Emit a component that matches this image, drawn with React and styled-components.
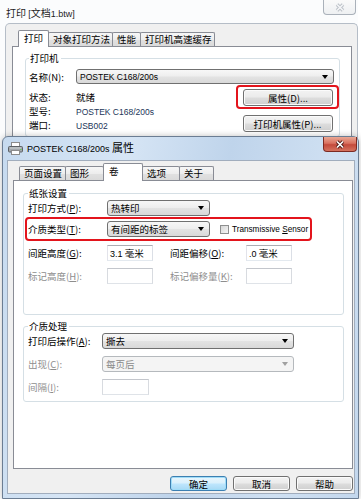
import React from 'react';
import styled, { createGlobalStyle } from 'styled-components';

const GlobalStyle = createGlobalStyle`
  html, body { margin: 0; padding: 0; background: #fff; }
  body {
    font-family: "Noto Sans CJK SC", "Noto Sans", sans-serif;
    font-size: 9.5px;
    line-height: 12px;
    color: #000;
  }
  * { box-sizing: border-box; }
`;

const Desktop = styled.div`
  position: relative;
  width: 361px;
  height: 499px;
  overflow: hidden;
  background: #fff;
`;

/* ---------- window chrome ---------- */

const BackWindow = styled.div`
  position: absolute;
  left: 0;
  top: 0;
  width: 358px;
  height: 150px;
  display: flex;
  flex-direction: column;
  background: #fbfcfd;
`;

const BackTitleBar = styled.div`
  height: 23px;
  display: flex;
  align-items: flex-start;
  padding-left: 6px;
`;

const BackTitle = styled.span`
  margin-top: 7px;
  font-size: 10px;
  color: #1e1e1e;
`;

const InactiveClose = styled.div`
  margin-left: auto;
  margin-right: 2px;
  width: 33px;
  height: 15px;
  display: flex;
  align-items: center;
  justify-content: center;
  border: 1px solid #aab1ba;
  border-top: none;
  border-radius: 0 0 4px 4px;
  background: linear-gradient(#fafafa, #eef0f2);
`;

const BackBody = styled.div`
  flex: 1;
  display: flex;
  flex-direction: column;
  margin-left: 5px;
  padding: 6px 5px 0 6px;
  border: 1px solid #b5bdc7;
  border-bottom: none;
  border-radius: 5px 5px 0 0;
  background: #f0f0f0;
`;

const Dialog = styled.div`
  position: absolute;
  left: 2px;
  top: 136px;
  width: 357px;
  height: 363px;
  display: flex;
  flex-direction: column;
  padding: 0 3px 4px 4px;
  border: 1px solid #6b7d93;
  border-radius: 6px 6px 0 0;
  background: linear-gradient(100deg, #c6daef 0%, #d6e5f5 30%, #bfd4eb 55%, #cfe0f2 80%, #c3d7ed 100%);
  box-shadow: 0 0 6px rgba(0, 0, 0, 0.25);
`;

const TitleBar = styled.div`
  height: 23px;
  margin: 0 -3px 0 -4px;
  padding-left: 5px;
  display: flex;
  align-items: flex-start;
`;

const TitleIcon = styled.svg`
  margin-top: 5px;
  flex: none;
`;

const TitleText = styled.span`
  margin: 4px 0 0 4px;
  font-size: 11px;
  line-height: 13px;
  color: #000;
`;

const CloseButton = styled.div`
  margin-left: auto;
  margin-right: 1px;
  width: 34px;
  height: 15px;
  display: flex;
  align-items: center;
  justify-content: center;
  border: 1px solid #7c2a22;
  border-top: none;
  border-radius: 0 0 4px 4px;
  background: linear-gradient(#eaa894 0%, #d9705f 45%, #c44a3b 55%, #d5735f 100%);
`;

const DialogBody = styled.div`
  flex: 1;
  display: flex;
  flex-direction: column;
  padding: 2px 1px 2px 5px;
  border: 1px solid #a1adbd;
  background: #f0f0f0;
`;

/* ---------- tabs ---------- */

const TabRow = styled.div`
  display: flex;
  align-items: flex-end;
  height: ${p => p.$h}px;
  padding-left: ${p => p.$indent}px;
  position: relative;
  z-index: 1;
`;

const Tab = styled.div`
  width: ${p => p.$w}px;
  height: ${p => (p.$active ? 'auto' : '14px')};
  align-self: ${p => (p.$active ? 'stretch' : 'flex-end')};
  margin-bottom: ${p => (p.$active ? -1 : 0)}px;
  margin-left: ${p => (p.$first ? 0 : -1)}px;
  padding: ${p => (p.$active ? '1px 0 0 5px' : '0 0 0 4px')};
  border: 1px solid #898c95;
  border-bottom: none;
  border-radius: 2px 2px 0 0;
  white-space: nowrap;
  background: ${p =>
    p.$active ? '#fff' : 'linear-gradient(#f7f7f7 0%, #ededed 50%, #e1e1e1 51%, #dadada 100%)'};
  position: relative;
  z-index: ${p => (p.$active ? 2 : 1)};
`;

const Panel = styled.div`
  flex: 1;
  display: flex;
  flex-direction: column;
  padding: ${p => p.$pad};
  border: 1px solid #898c95;
  background: #fff;
`;

/* ---------- groups and rows ---------- */

const Group = styled.fieldset`
  margin: ${p => p.$mt || 0}px 0 0 0;
  min-width: 0;
  padding: 0 ${p => p.$pr || 0}px ${p => p.$pb || 0}px ${p => p.$pl || 4}px;
  border: 1px solid #d5dfe5;
  border-radius: 3px;
`;

const Legend = styled.legend`
  padding: 0 2px 0 1px;
  font-size: 9.5px;
  line-height: 12px;
  color: #000;
`;

const Row = styled.div`
  display: flex;
  align-items: center;
  height: ${p => p.$h || 16}px;
  margin-top: ${p => p.$mt || 0}px;
`;

const Highlight = styled.div`
  display: flex;
  flex-direction: ${p => p.$dir || 'row'};
  align-items: center;
  width: ${p => p.$w}px;
  height: ${p => p.$h}px;
  margin: ${p => p.$m};
  padding: ${p => p.$pad};
  border: 2px solid #e3141c;
  border-radius: 4px;
`;

const Label = styled.span`
  flex: none;
  width: ${p => p.$w}px;
  margin-left: ${p => p.$ml || 0}px;
  white-space: nowrap;
  color: ${p => (p.$disabled ? '#8e8e8e' : '#000')};
`;

const Key = styled.span`
  text-decoration: underline;
`;

const Latin = styled.span`
  font-family: "Liberation Sans", Arial, sans-serif;
  font-size: ${p => p.$size || 8.5}px;
`;

const Value = styled.span`
  white-space: nowrap;
  color: ${p => p.$tone || '#000'};
`;

const Combo = styled.div`
  flex: none;
  width: ${p => p.$w}px;
  height: ${p => p.$h || 16}px;
  display: flex;
  align-items: center;
  justify-content: space-between;
  padding: 0 5px 0 3px;
  border: 1px solid ${p => (p.$disabled ? '#b5b9bd' : '#707070')};
  border-radius: 3px;
  white-space: nowrap;
  color: ${p => (p.$disabled ? '#8a8a8a' : '#000')};
  background: ${p =>
    p.$disabled
      ? '#f4f4f4'
      : 'linear-gradient(#f7f7f7 0%, #eeeeee 48%, #e3e3e3 52%, #d9d9d9 100%)'};
`;

const Arrow = styled.span`
  width: 0;
  height: 0;
  border-left: 3.5px solid transparent;
  border-right: 3.5px solid transparent;
  border-top: 4px solid ${p => (p.$disabled ? '#a0a0a0' : '#000')};
`;

const Field = styled.div`
  flex: none;
  width: ${p => p.$w || 46}px;
  height: 16px;
  padding-left: 2px;
  border: 1px solid;
  border-color: ${p =>
    p.$disabled ? '#c3c6cc #d8dbe0 #dfe3e8 #d8dbe0' : '#abadb3 #dbdfe6 #e3e9ef #e2e3ea'};
  background: #fff;
  line-height: 14px;
  white-space: nowrap;
`;

const Check = styled.span`
  flex: none;
  width: 9px;
  height: 9px;
  margin: 0 3px 0 10px;
  border: 1px solid #8e8f8f;
  background: linear-gradient(135deg, #d6d6d6, #f6f6f6);
`;

const Split = styled.div`
  display: flex;
  justify-content: space-between;
  margin-top: 1px;
`;

const InfoList = styled.div`
  display: flex;
  flex-direction: column;
  padding-top: 5px;
`;

const InfoRow = styled.div`
  display: flex;
  align-items: center;
  height: 14px;
`;

const ButtonStack = styled.div`
  width: 103px;
  display: flex;
  flex-direction: column;
  align-items: center;
  gap: 6px;
  padding-bottom: 4px;
`;

const Button = styled.button`
  width: ${p => p.$w}px;
  height: ${p => p.$h}px;
  margin: 0;
  padding: 0;
  display: flex;
  align-items: center;
  justify-content: center;
  font: inherit;
  color: #000;
  white-space: nowrap;
  border: 1px solid ${p => (p.$primary ? '#3c7fb1' : '#707070')};
  border-radius: 3px;
  box-shadow: inset 0 0 0 1px ${p => (p.$primary ? '#9fdcf8' : '#fbfbfb')};
  background: ${p =>
    p.$primary
      ? 'linear-gradient(#eaf6fd 0%, #d9f0fc 48%, #bee6fd 52%, #a7d9f5 100%)'
      : 'linear-gradient(#f3f3f3 0%, #ebebeb 48%, #dddddd 52%, #cfcfcf 100%)'};
`;

const ButtonBar = styled.div`
  display: flex;
  justify-content: flex-end;
  gap: 6px;
  margin-top: 7px;
`;

/* ---------- drawings ---------- */

const CloseGlyph = ({ inactive }) => (
  <svg width="12" height="9" viewBox="0 0 12 9">
    <path d="M3 1.5 L9 7.5 M9 1.5 L3 7.5" stroke={inactive ? '#b9bec5' : '#4d1712'} strokeWidth="3.4" />
    <path d="M3 1.5 L9 7.5 M9 1.5 L3 7.5" stroke={inactive ? '#f4f5f7' : '#ffffff'} strokeWidth="1.7" />
  </svg>
);

const PrinterIcon = () => (
  <TitleIcon width="15" height="13" viewBox="0 0 15 13">
    <rect x="3.5" y="0.5" width="8" height="4" fill="#fff" stroke="#8c8c8c" />
    <rect x="0.5" y="4.5" width="14" height="5.5" rx="1" fill="#a3a8ad" stroke="#5d6166" />
    <rect x="2" y="5.5" width="11" height="1" fill="#d0d3d6" />
    <rect x="12" y="7" width="1.5" height="1" fill="#5ec85e" />
    <rect x="3.5" y="8.5" width="8" height="4" fill="#fff" stroke="#8c8c8c" />
  </TitleIcon>
);

const backTabs = [
  { text: '打印', w: 31, active: true },
  { text: '对象打印方法', w: 65 },
  { text: '性能', w: 29 },
  { text: '打印机高速缓存', w: 75 },
];

const frontTabs = [
  { text: '页面设置', w: 47 },
  { text: '图形', w: 39 },
  { text: '卷', w: 40, active: true },
  { text: '选项', w: 38 },
  { text: '关于', w: 35 },
];

const MODEL = 'POSTEK C168/200s';

const App = () => (
  <>
    <GlobalStyle />
    <Desktop>
      <BackWindow>
        <BackTitleBar>
          <BackTitle>
            打印 <Latin $size={9}>[</Latin>文档<Latin $size={9}>1.btw]</Latin>
          </BackTitle>
          <InactiveClose>
            <CloseGlyph inactive />
          </InactiveClose>
        </BackTitleBar>
        <BackBody>
          <TabRow $h={16} $indent={6}>
            {backTabs.map((t, i) => (
              <Tab key={t.text} $w={t.w} $active={t.active} $first={i === 0}>
                {t.text}
              </Tab>
            ))}
          </TabRow>
          <Panel $pad="5px 11px 0 12px">
            <Group $pl={3}>
              <Legend>打印机</Legend>
              <Row $mt={5} $h={15}>
                <Label $w={47}>名称(N):</Label>
                <Combo $w={258} $h={15}>
                  <Latin>{MODEL}</Latin>
                  <Arrow />
                </Combo>
              </Row>
              <Split>
                <InfoList>
                  <InfoRow>
                    <Label $w={47}>状态:</Label>
                    <Value>就绪</Value>
                  </InfoRow>
                  <InfoRow>
                    <Label $w={47}>型号:</Label>
                    <Value $tone="#1b3558">
                      <Latin>{MODEL}</Latin>
                    </Value>
                  </InfoRow>
                  <InfoRow>
                    <Label $w={47}>端口:</Label>
                    <Value $tone="#1b3558">
                      <Latin>USB002</Latin>
                    </Value>
                  </InfoRow>
                </InfoList>
                <ButtonStack>
                  <Highlight $dir="column" $w={103} $h={24} $m="0" $pad="2px 4px 1px 5px">
                    <Button $w={90} $h={17}>属性(D)...</Button>
                  </Highlight>
                  <Button $w={90} $h={17}>打印机属性(P)...</Button>
                </ButtonStack>
              </Split>
            </Group>
          </Panel>
        </BackBody>
      </BackWindow>

      <Dialog>
        <TitleBar>
          <PrinterIcon />
          <TitleText>
            <Latin $size={9}>{MODEL}</Latin> 属性
          </TitleText>
          <CloseButton>
            <CloseGlyph />
          </CloseButton>
        </TitleBar>
        <DialogBody>
          <TabRow $h={17} $indent={6}>
            {frontTabs.map((t, i) => (
              <Tab key={t.text} $w={t.w} $active={t.active} $first={i === 0}>
                {t.text}
              </Tab>
            ))}
          </TabRow>
          <Panel $pad="6px 8px 0 9px">
            <Group $pb={30}>
              <Legend>纸张设置</Legend>
              <Row $mt={1}>
                <Label $w={79}>
                  打印方式(<Key>P</Key>):
                </Label>
                <Combo $w={103}>
                  热转印
                  <Arrow />
                </Combo>
              </Row>
              <Highlight $w={287} $h={24} $m="1px 0 0 -3px" $pad="0 0 0 1px">
                <Label $w={79}>
                  介质类型(<Key>T</Key>):
                </Label>
                <Combo $w={103}>
                  有间距的标签
                  <Arrow />
                </Combo>
                <Check />
                <Value>
                  <Latin $size={8.2}>
                    Transmissive <Key>S</Key>ensor
                  </Latin>
                </Value>
              </Highlight>
              <Row $mt={4}>
                <Label $w={79}>
                  间距高度(<Key>G</Key>):
                </Label>
                <Field>
                  <Latin $size={9}>3.1</Latin> 毫米
                </Field>
                <Label $w={76} $ml={17}>
                  间距偏移(<Key>O</Key>):
                </Label>
                <Field>
                  <Latin $size={9}>.0</Latin> 毫米
                </Field>
              </Row>
              <Row $mt={7}>
                <Label $w={79} $disabled>
                  标记高度(<Key>H</Key>):
                </Label>
                <Field $disabled />
                <Label $w={76} $ml={17} $disabled>
                  标记偏移量(<Key>K</Key>):
                </Label>
                <Field $disabled />
              </Row>
            </Group>

            <Group $mt={5} $pb={6}>
              <Legend>介质处理</Legend>
              <Row $mt={1}>
                <Label $w={74}>
                  打印后操作(<Key>A</Key>):
                </Label>
                <Combo $w={192}>
                  撕去
                  <Arrow />
                </Combo>
              </Row>
              <Row $mt={7}>
                <Label $w={74} $disabled>
                  出现(<Key>C</Key>):
                </Label>
                <Combo $w={192} $disabled>
                  每页后
                  <Arrow $disabled />
                </Combo>
              </Row>
              <Row $mt={7}>
                <Label $w={74} $disabled>
                  间隔(<Key>I</Key>):
                </Label>
                <Field $w={47} $disabled />
              </Row>
            </Group>
          </Panel>
          <ButtonBar>
            <Button $w={57} $h={15} $primary>确定</Button>
            <Button $w={57} $h={15}>取消</Button>
            <Button $w={57} $h={15}>帮助</Button>
          </ButtonBar>
        </DialogBody>
      </Dialog>
    </Desktop>
  </>
);

export default App;
